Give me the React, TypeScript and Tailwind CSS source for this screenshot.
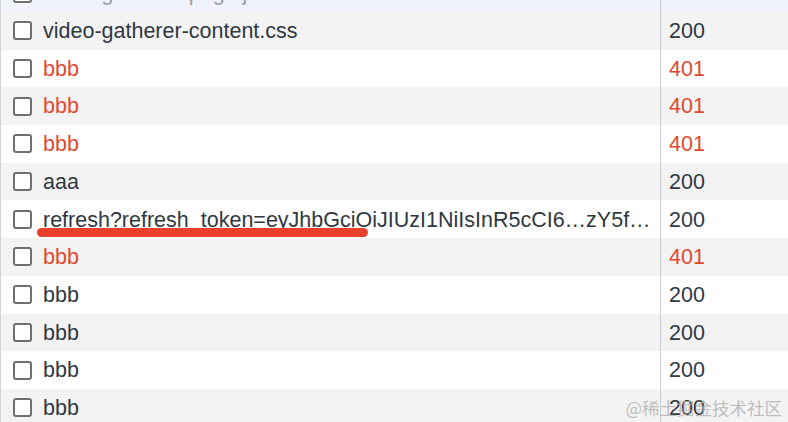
const rows = [
  {name: "video-gatherer-page.js", status: "200", error: false, partial: true},
  {name: "video-gatherer-content.css", status: "200", error: false},
  {name: "bbb", status: "401", error: true},
  {name: "bbb", status: "401", error: true},
  {name: "bbb", status: "401", error: true},
  {name: "aaa", status: "200", error: false},
  {name: "refresh?refresh_token=eyJhbGciOiJIUzI1NiIsInR5cCI6…zY5f…", status: "200", error: false, marked: true},
  {name: "bbb", status: "401", error: true},
  {name: "bbb", status: "200", error: false},
  {name: "bbb", status: "200", error: false},
  {name: "bbb", status: "200", error: false},
  {name: "bbb", status: "200", error: false},
];

const Checkbox = () => (
  <div className="w-[19px] h-[19px] shrink-0 rounded-[3px] border-2 border-[#6f6f6f] bg-white"/>
);

export default function App() {
  return (
    <div
      className="relative w-[788px] h-[422px] overflow-hidden bg-white border-l border-[#d3d3d3]"
      style={{fontFamily: '"Liberation Sans", Arial, sans-serif'}}
    >
      <div className="flex flex-col -mt-[25.7px]">
        {rows.map((row, i) => {
          const bg = row.partial ? "bg-[#f0f3fb]" : i % 2 === 1 ? "bg-[#f3f3f3]" : "bg-white";
          const color = row.partial ? "text-[#9a9fa6]" : row.error ? "text-[#e2472f]" : "text-[#2f3941]";
          return (
            <div key={i} className={`flex h-[37.7px] shrink-0 ${bg}`}>
              <div className="relative flex items-center w-[659px] shrink-0 pl-[12px] gap-[11px]">
                <Checkbox/>
                <div className={`whitespace-nowrap overflow-hidden pt-[2px] text-[21.5px] leading-none ${color}`}>
                  {row.name}
                </div>
                {row.marked && (
                  <div className="absolute left-[36px] top-[28px] w-[331px] h-[9px] rounded-full bg-[#e8402a]"/>
                )}
              </div>
              <div className={`flex items-center border-l border-[#cbced2] pl-[8px] pt-[2px] text-[21.5px] leading-none ${color}`}>
                {row.status}
              </div>
            </div>
          );
        })}
      </div>
      <div
        className="absolute right-[6px] bottom-[1px] text-[17.5px] text-[#b0b0b0]/80 whitespace-nowrap"
        style={{fontFamily: '"Noto Sans CJK SC", sans-serif'}}
      >
        @稀土掘金技术社区
      </div>
    </div>
  );
}
